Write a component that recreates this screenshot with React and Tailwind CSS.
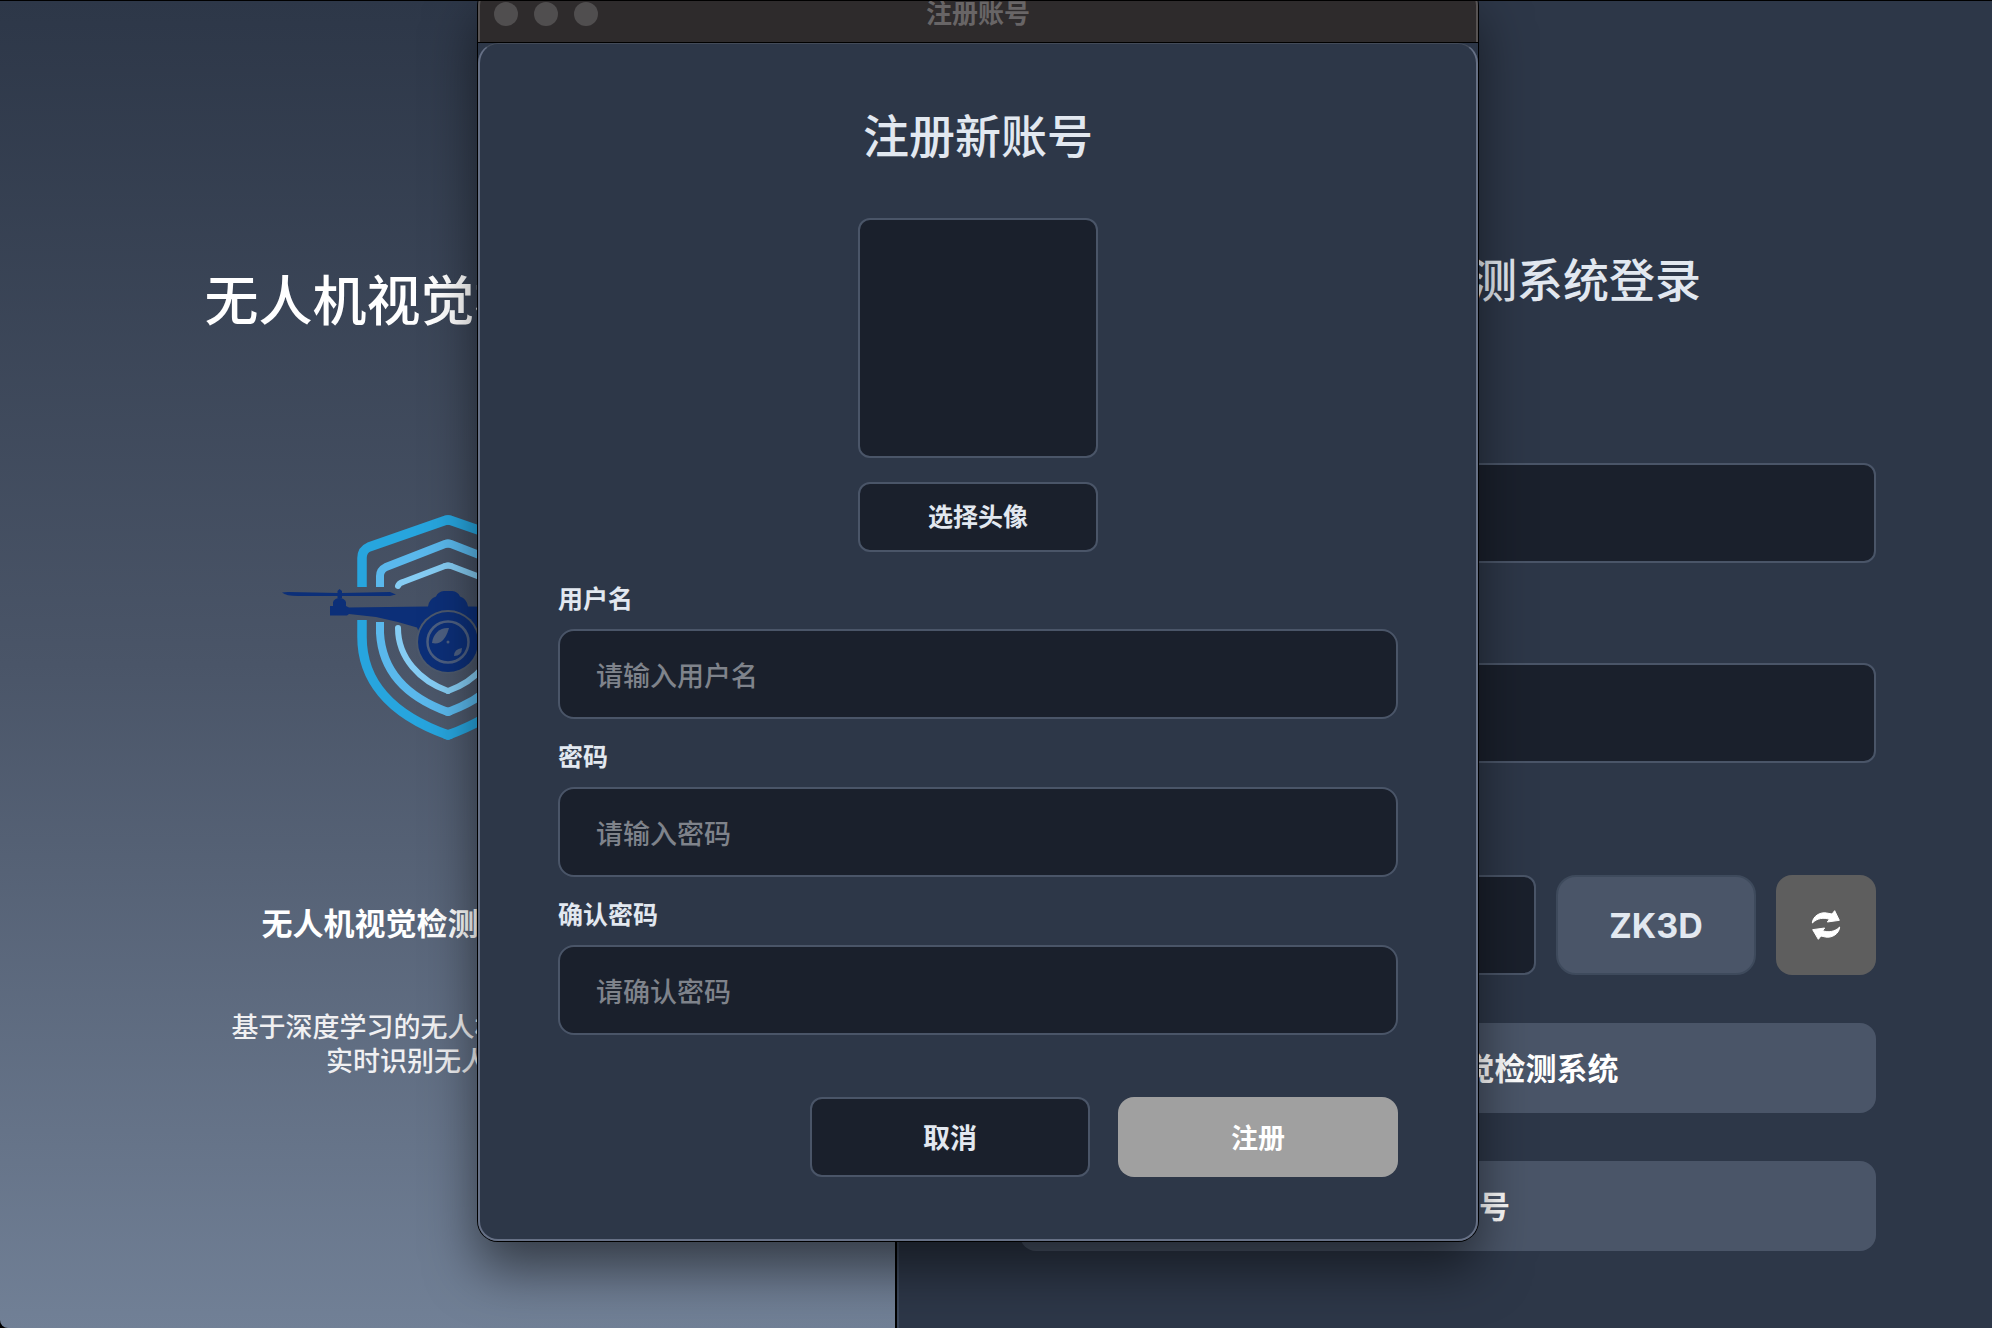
import React, { useState } from 'react';

const fontStack = "font-['Inter','Noto_Sans_CJK_SC',sans-serif]";

const registerFields = [
  { id: 'reg-username', label: '用户名', placeholder: '请输入用户名', type: 'text' },
  { id: 'reg-password', label: '密码', placeholder: '请输入密码', type: 'password' },
  { id: 'reg-confirm', label: '确认密码', placeholder: '请确认密码', type: 'password' }
];

const DroneHalf = () => (
  <>
    <g fill="none" strokeLinejoin="round">
      <path d="M84 77V48Q84 40 91 37L167 10.500Q170 9.500 173 10.500" stroke="#27a5de" strokeWidth="9.500" />
      <path d="M84 110V127C84 167 108 203 170 225L173 224" stroke="#27a5de" strokeWidth="9.500" />
      <path d="M102 77V66Q102 60 108 57L167 34Q170 33 173 34" stroke="#5ab8ec" strokeWidth="8" />
      <path d="M102 112V123C104 160 126 186 170 202L173 201" stroke="#5ab8ec" strokeWidth="8" />
      <path d="M120 76Q121 73 125 72L167 56Q170 55 173 56" stroke="#85ccf3" strokeWidth="6" strokeLinecap="round" />
      <path d="M120 118C120 148 142 171 170 181" stroke="#85ccf3" strokeWidth="6" strokeLinecap="round" />
    </g>
    <g fill="#0c2f78">
      <path d="M4 82.500L10 82L60 83V86L20 86Q8 86 4 82.500Z" />
      <path d="M64 83L112 82L118 84.500L112 86H64Z" />
      <path d="M59.500 81L61.500 79L64 81V88H59.500Z" />
      <path d="M55 97V92Q57 88 61.500 88Q66 88 68 92V97Z" />
      <path d="M52 96H68L71 97.500L150 96.500Q151 89 158 86.500Q160 81.500 166 81H170V125H142L139 117.500Q118 111 98 107L71 104L69 105.500H52Z" />
    </g>
  </>
);

const DroneLogo = () => (
  <svg viewBox="0 0 340 236" className="w-[340px] h-[236px]" aria-hidden="true">
    <DroneHalf />
    <g transform="translate(340 0) scale(-1 1)">
      <DroneHalf />
    </g>
    <circle cx="170" cy="132" r="32" fill="#4d596c" />
    <circle cx="170" cy="132" r="30" fill="#0c2f78" />
    <circle cx="170" cy="132" r="20.500" fill="none" stroke="#4d5f80" strokeWidth="2.500" />
    <path d="M171 118C163 117 155 123 154 133Q166 136 171 118Z" fill="#4d5f80" />
    <path d="M184 138Q176 139 176 146Q184 146 184 138Z" fill="#4d5f80" />
    <circle cx="170" cy="132" r="1.500" fill="#4d5f80" />
  </svg>
);

const RefreshArrows = () => (
  <svg viewBox="0 0 120 120" className="w-10 h-10" fill="#ffffff" stroke="#ffffff" strokeWidth="3" strokeLinejoin="round" aria-hidden="true">
    <path d="M19 54C20 34 42 20 62 24L78 27L86 17L100 46L64 51L70 43C54 37 34 39 19 54Z" />
    <path d="M101 66C100 86 78 100 58 96L45 93L37 103L20 74L56 69L50 77C66 83 86 81 101 66Z" />
  </svg>
);

const IntroPanel = () => (
  <section className="w-[895px] shrink-0 flex flex-col items-center rounded-bl-lg pt-[261px] bg-linear-to-b from-[#2d3748] via-[#4a5568] to-[#718096] text-white">
    <h1 className="text-[54px] leading-[80px] font-medium whitespace-nowrap">无人机视觉检测系统</h1>
    <div className="mt-[168px]">
      <DroneLogo />
    </div>
    <h2 className="mt-[158px] text-[31px] leading-[40px] font-bold whitespace-nowrap">无人机视觉检测与识别系统</h2>
    <p className="mt-[67px] text-[27px] leading-[34px] text-center text-[#f0f0f2] font-medium">
      基于深度学习的无人机视觉检测技术
      <br />
      实时识别无人机目标
    </p>
  </section>
);

const LoginPanel = () => (
  <section className="flex-1 border-l-2 border-[#3b475b] bg-[#2d3748] pt-[248px] pl-[121px] pr-[116px] text-[#e2e8f0]">
    <h2 className="text-[46px] leading-[62px] font-medium text-center whitespace-nowrap">无人机视觉检测系统登录</h2>
    <form onSubmit={(e) => e.preventDefault()}>
      <label htmlFor="login-user" className="block mt-[104px] mb-3 text-[25px] leading-9 font-bold">用户名</label>
      <input id="login-user" type="text" className="block w-full h-[100px] px-9 rounded-xl border-2 border-[#4a5568] bg-[#1a202c] text-[27px]" />
      <label htmlFor="login-pass" className="block mt-[52px] mb-3 text-[25px] leading-9 font-bold">密码</label>
      <input id="login-pass" type="password" className="block w-full h-[100px] px-9 rounded-xl border-2 border-[#4a5568] bg-[#1a202c] text-[27px]" />
      <label htmlFor="login-code" className="block mt-16 mb-3 text-[25px] leading-9 font-bold">验证码</label>
      <div className="flex gap-5">
        <input id="login-code" type="text" className="flex-1 min-w-0 h-[100px] px-9 rounded-xl border-2 border-[#4a5568] bg-[#1a202c] text-[27px]" />
        <div className="w-[200px] h-[100px] flex items-center justify-center rounded-[20px] border-2 border-[#3e4a5c] bg-[#4a5568] text-[34px] font-bold">ZK3D</div>
        <button type="button" aria-label="刷新验证码" className="w-[100px] h-[100px] flex items-center justify-center rounded-2xl bg-[#5e5e5e]">
          <RefreshArrows />
        </button>
      </div>
      <button type="submit" className="block w-full h-[90px] mt-12 pt-0.5 rounded-2xl bg-[#4a5568] text-white text-[31px] font-bold">登录无人机视觉检测系统</button>
      <button type="button" className="block w-full h-[90px] mt-12 pt-0.5 rounded-2xl bg-[#4a5568] text-white text-[31px] font-bold">注册账号</button>
    </form>
  </section>
);

const RegisterDialog = () => {
  const [values, setValues] = useState({});

  return (
    <div
      role="dialog"
      aria-labelledby="register-title"
      className="absolute left-[478px] -top-[15px] w-[1000px] rounded-[20px] bg-[#2d3748] text-[#e2e8f0] shadow-[0_0_0_1px_#000000,0_28px_52px_0_rgba(0,0,0,0.5)]"
    >
      {/* Title bar */}
      <header className="h-14 grid grid-cols-3 items-center px-[14px] rounded-t-[20px] border-x-2 border-[#575353] bg-[#2e2b2c]">
        <div className="flex gap-4">
          <span className="w-6 h-6 rounded-full bg-[#504e4f]" />
          <span className="w-6 h-6 rounded-full bg-[#504e4f]" />
          <span className="w-6 h-6 rounded-full bg-[#504e4f]" />
        </div>
        <span className="text-center text-[26px] leading-8 font-bold text-[#686566]">注册账号</span>
      </header>

      {/* Body */}
      <div className="border-t border-black rounded-b-[20px]">
        <div className="rounded-[20px] border-2 border-t border-x-[#667085] border-b-[#667085] border-t-[#434b59] px-[78px] pt-[61px] pb-[62px]">
          <h2 id="register-title" className="text-[46px] leading-[62px] font-medium text-center">注册新账号</h2>
          <div className="mt-[51px] flex flex-col items-center gap-6">
            <div className="w-60 h-60 rounded-xl border-2 border-[#4a5568] bg-[#1a202c]" />
            <button type="button" className="w-60 h-[70px] pt-0.5 rounded-xl border-2 border-[#4a5568] bg-[#1a202c] text-[25px] font-bold">选择头像</button>
          </div>
          <form className="mt-[29px]" onSubmit={(e) => e.preventDefault()}>
            <div className="flex flex-col gap-5">
              {registerFields.map((field) => (
                <div key={field.id}>
                  <label htmlFor={field.id} className="block mb-3 text-[25px] leading-9 font-bold">{field.label}</label>
                  <input
                    id={field.id}
                    type={field.type}
                    placeholder={field.placeholder}
                    value={values[field.id] || ''}
                    onChange={(e) => setValues({ ...values, [field.id]: e.target.value })}
                    className="block w-full h-[90px] px-9 pt-1 rounded-2xl border-2 border-[#4a5568] bg-[#1a202c] text-[27px] font-medium placeholder:text-[#7f838b]"
                  />
                </div>
              ))}
            </div>
            <div className="mt-[62px] flex justify-end gap-7">
              <button type="button" className="w-[280px] h-20 pt-1 rounded-xl border-2 border-[#4a5568] bg-[#1a202c] text-[27px] font-bold">取消</button>
              <button type="submit" className="w-[280px] h-20 pt-1 rounded-2xl bg-[#a0a0a0] text-white text-[27px] font-bold">注册</button>
            </div>
          </form>
        </div>
      </div>
    </div>
  );
};

const App = () => (
  <div className={`relative min-h-screen flex overflow-hidden border-t border-black bg-black ${fontStack}`}>
    <main className="flex flex-1 gap-0.5">
      <IntroPanel />
      <LoginPanel />
    </main>
    <RegisterDialog />
  </div>
);

export default App;
